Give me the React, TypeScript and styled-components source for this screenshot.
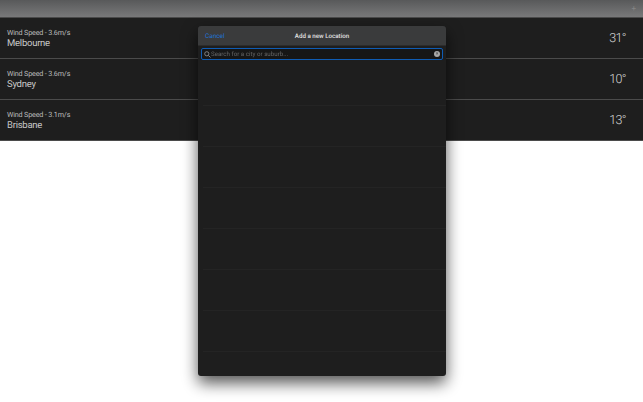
import { createGlobalStyle } from 'styled-components'
import styled from 'styled-components'

const GlobalStyle = createGlobalStyle`
  html, body {
    margin: 0;
    padding: 0;
    height: 100%;
    background: #ffffff;
    overflow: hidden;
    font-family: 'Roboto', 'Liberation Sans', sans-serif;
    text-rendering: geometricPrecision;
  }
`

// the reference is a scaled down capture, so everything is a little soft
const Page = styled.div`
  position: relative;
  width: 643px;
  height: 402px;
  overflow: hidden;
  filter: blur(0.3px);
  will-change: opacity;
  opacity: 0.999;
`

const TopBar = styled.div`
  height: 17px;
  display: flex;
  align-items: center;
  justify-content: flex-end;
  padding-right: 7px;
  background: linear-gradient(#58595a, #79797a);
  border-bottom: 1px solid #4a4a4a;
  color: #858586;
  font-size: 8px;
  line-height: 1;
`

const CityRow = styled.div`
  height: 41px;
  box-sizing: border-box;
  display: flex;
  align-items: center;
  justify-content: space-between;
  padding: 1px 17px 0 7px;
  background: #1e1e1e;
  border-bottom: 1px solid #4b4b4b;

  &:last-of-type {
    border-bottom-color: #6a6a6a;
  }
`

const CityInfo = styled.div`
  display: flex;
  flex-direction: column;
`

const Wind = styled.span`
  font-size: 7.2px;
  line-height: 10px;
  letter-spacing: -0.17px;
  color: #bdbdbd;
`

const CityName = styled.span`
  font-size: 9.5px;
  line-height: 12px;
  letter-spacing: -0.25px;
  color: #c8c8c8;
`

const Temp = styled.span`
  font-size: 12.5px;
  font-weight: 300;
  letter-spacing: -0.6px;
  color: #d6d6d6;
`

const Sheet = styled.div`
  position: absolute;
  left: 198px;
  top: 26px;
  width: 248px;
  height: 350px;
  border-radius: 3px;
  overflow: hidden;
  background: #1e1e1e;
  box-shadow: 0 7px 16px rgba(0, 0, 0, 0.68);
  display: flex;
  flex-direction: column;
`

const SheetHeader = styled.div`
  height: 19px;
  flex: none;
  position: relative;
  display: flex;
  align-items: center;
  justify-content: center;
  background: #3a3b3c;
  border-bottom: 1px solid #2c2c2c;
`

const CancelLink = styled.span`
  position: absolute;
  left: 7px;
  font-size: 6.4px;
  color: #1f74d6;
`

const SheetTitle = styled.span`
  font-size: 6.2px;
  font-weight: 500;
  color: #e2e2e2;
`

const SearchBar = styled.div`
  margin: 2px 3px 0;
  height: 12px;
  box-sizing: border-box;
  flex: none;
  display: flex;
  align-items: center;
  padding: 0 2px;
  border: 1.5px solid #0f5cb4;
  border-radius: 2px;
  background: #161616;
`

const SearchText = styled.span`
  flex: 1;
  font-size: 6.2px;
  color: #666666;
`

const ClearDot = styled.span`
  width: 6px;
  height: 6px;
  border-radius: 50%;
  background: #a8a8a8;
  color: #333333;
  font-size: 5px;
  line-height: 6px;
  text-align: center;
`

const ResultList = styled.div`
  padding-top: 5px;
`

const ResultRow = styled.div`
  height: 41px;
  box-sizing: border-box;
  margin-left: 5px;
  border-bottom: 1px solid #242424;
`

const cities = [
  { name: 'Melbourne', wind: '3.6', temp: '31°' },
  { name: 'Sydney', wind: '3.6', temp: '10°' },
  { name: 'Brisbane', wind: '3.1', temp: '13°' },
]

export default function App() {
  return (
    <Page>
      <GlobalStyle />
      <TopBar>+</TopBar>
      {cities.map((city) => (
        <CityRow key={city.name}>
          <CityInfo>
            <Wind>Wind Speed - {city.wind}m/s</Wind>
            <CityName>{city.name}</CityName>
          </CityInfo>
          <Temp>{city.temp}</Temp>
        </CityRow>
      ))}
      <Sheet>
        <SheetHeader>
          <CancelLink>Cancel</CancelLink>
          <SheetTitle>Add a new Location</SheetTitle>
        </SheetHeader>
        <SearchBar>
          <svg width="7" height="7" viewBox="0 0 10 10" fill="none" stroke="#8a8a8a" strokeWidth="1.3">
            <circle cx="4" cy="4" r="3" />
            <path d="M6.3 6.3 9.3 9.3" />
          </svg>
          <SearchText>Search for a city or suburb...</SearchText>
          <ClearDot>×</ClearDot>
        </SearchBar>
        <ResultList>
          {Array.from({ length: 8 }, (_, i) => (
            <ResultRow key={i} />
          ))}
        </ResultList>
      </Sheet>
    </Page>
  )
}
